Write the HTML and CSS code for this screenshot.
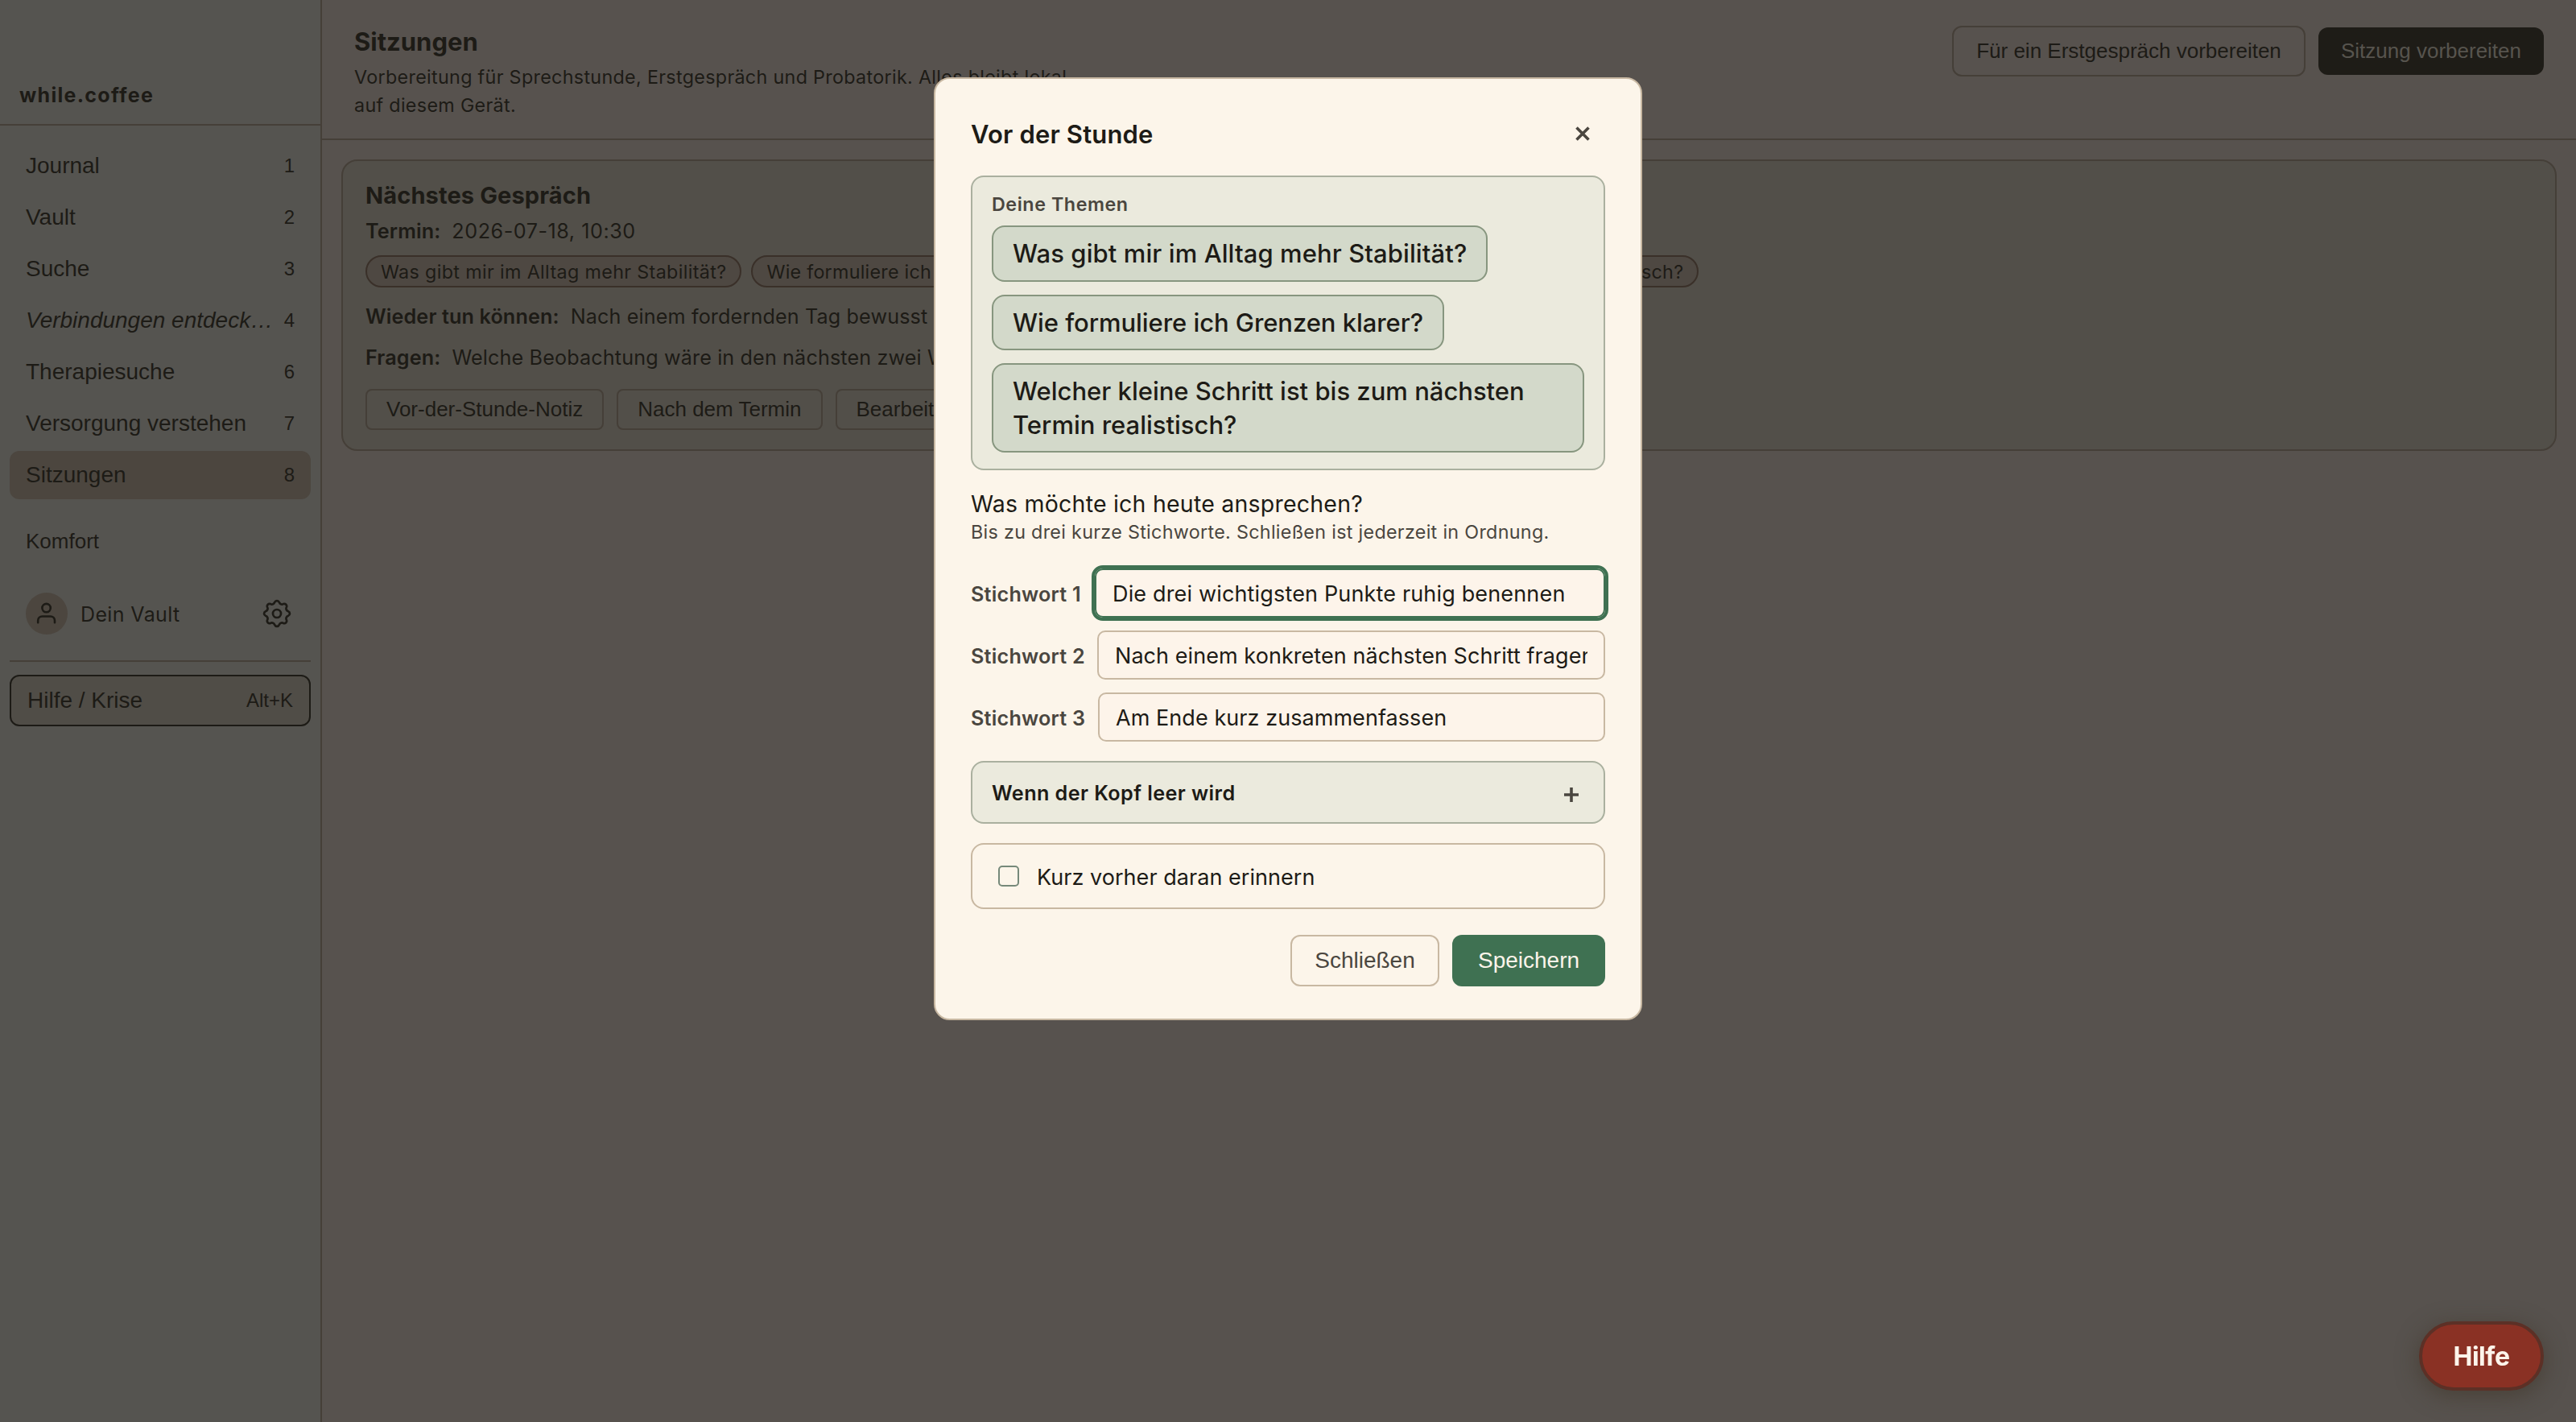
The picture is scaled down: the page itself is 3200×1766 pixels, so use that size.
FILE: index.html
```html
<!DOCTYPE html>
<html lang="de">
<head>
<meta charset="utf-8">
<title>while.coffee – Sitzungen</title>
<link rel="stylesheet" href="styles.css">
</head>
<body>
<div class="app">
  <aside class="sidebar">
    <div class="brand">while.coffee</div>
    <nav class="nav">
      <a class="nav-item"><span class="nav-label">Journal</span><span class="nav-key">1</span></a>
      <a class="nav-item"><span class="nav-label">Vault</span><span class="nav-key">2</span></a>
      <a class="nav-item"><span class="nav-label">Suche</span><span class="nav-key">3</span></a>
      <a class="nav-item nav-item-italic"><span class="nav-label">Verbindungen entdecken</span><span class="nav-key">4</span></a>
      <a class="nav-item"><span class="nav-label">Therapiesuche</span><span class="nav-key">6</span></a>
      <a class="nav-item"><span class="nav-label">Versorgung verstehen</span><span class="nav-key">7</span></a>
      <a class="nav-item nav-item-active"><span class="nav-label">Sitzungen</span><span class="nav-key">8</span></a>
    </nav>
    <div class="comfort">Komfort</div>
    <div class="profile">
      <span class="avatar">
        <svg width="31.2" height="31.2" viewBox="0 0 24 24" fill="none" stroke="currentColor" stroke-width="2" stroke-linecap="round" stroke-linejoin="round"><path d="M20 21v-2a4 4 0 0 0-4-4H8a4 4 0 0 0-4 4v2"/><circle cx="12" cy="7" r="4"/></svg>
      </span>
      <span class="profile-name">Dein Vault</span>
      <svg class="gear" width="36" height="36" viewBox="-18 -18 36 36" fill="none" stroke="currentColor" stroke-width="2.7" stroke-linejoin="round"><path d="M-2.79-14.03A3 3 0 0 1 2.79-14.03A3.6 3.6 0 0 0 7.94-11.89A3 3 0 0 1 11.89-7.94A3.6 3.6 0 0 0 14.03-2.79A3 3 0 0 1 14.03 2.79A3.6 3.6 0 0 0 11.89 7.94A3 3 0 0 1 7.94 11.89A3.6 3.6 0 0 0 2.79 14.03A3 3 0 0 1-2.79 14.03A3.6 3.6 0 0 0-7.94 11.89A3 3 0 0 1-11.89 7.94A3.6 3.6 0 0 0-14.03 2.79A3 3 0 0 1-14.03-2.79A3.6 3.6 0 0 0-11.89-7.94A3 3 0 0 1-7.94-11.89A3.6 3.6 0 0 0-2.79-14.03Z"/><circle r="5"/></svg>
    </div>
    <div class="divider"></div>
    <button class="crisis"><span>Hilfe / Krise</span><span class="crisis-key">Alt+K</span></button>
  </aside>

  <main class="main">
    <header class="page-head">
      <div>
        <h1 class="page-title">Sitzungen</h1>
        <p class="page-sub">Vorbereitung für Sprechstunde, Erstgespräch und Probatorik. Alles bleibt lokal auf diesem Gerät.</p>
      </div>
      <div class="head-actions">
        <button class="btn-head">Für ein Erstgespräch vorbereiten</button>
        <button class="btn-head-dark">Sitzung vorbereiten</button>
      </div>
    </header>
    <section class="card">
      <h2 class="card-title">Nächstes Gespräch</h2>
      <p class="fact fact-date"><b>Termin:</b><span class="date">2026-07-18, 10:30</span></p>
      <div class="tags">
        <span class="tag">Was gibt mir im Alltag mehr Stabilität?</span>
        <span class="tag tag-tight">Wie formuliere ich Grenzen klarer?</span>
        <span class="tag tag-tight">Welcher kleine Schritt ist bis zum nächsten Termin realistisch?</span>
      </div>
      <p class="fact fact-again"><b>Wieder tun können:</b><span>Nach einem fordernden Tag bewusst</span></p>
      <p class="fact fact-ask"><b>Fragen:</b><span>Welche Beobachtung wäre in den nächsten zwei W</span></p>
      <div class="card-actions">
        <button class="btn-card">Vor-der-Stunde-Notiz</button>
        <button class="btn-card">Nach dem Termin</button>
        <button class="btn-card">Bearbeiten</button>
      </div>
    </section>
  </main>
</div>

<button class="help">Hilfe</button>

<div class="overlay">
  <div class="modal" role="dialog">
    <header class="modal-head">
      <h2 class="modal-title">Vor der Stunde</h2>
      <svg class="close" width="20" height="20" viewBox="0 0 20 20" fill="none" stroke="currentColor" stroke-width="3.6"><path d="M2.5 2.5l15 15M17.5 2.5l-15 15"/></svg>
    </header>
    <section class="topics">
      <div class="topics-label">Deine Themen</div>
      <div class="topic topic-1">Was gibt mir im Alltag mehr Stabilität?</div>
      <div class="topic topic-2">Wie formuliere ich Grenzen klarer?</div>
      <div class="topic topic-3">Welcher kleine Schritt ist bis zum nächsten<br>Termin realistisch?</div>
    </section>
    <h3 class="question">Was möchte ich heute ansprechen?</h3>
    <p class="hint">Bis zu drei kurze Stichworte. Schließen ist jederzeit in Ordnung.</p>
    <div class="fields">
      <label class="field"><span class="field-label label-1">Stichwort 1</span><input class="field-input field-focus" type="text" value="Die drei wichtigsten Punkte ruhig benennen"></label>
      <label class="field"><span class="field-label label-2">Stichwort 2</span><input class="field-input" type="text" value="Nach einem konkreten nächsten Schritt fragen"></label>
      <label class="field"><span class="field-label label-3">Stichwort 3</span><input class="field-input" type="text" value="Am Ende kurz zusammenfassen"></label>
    </div>
    <div class="accordion"><span>Wenn der Kopf leer wird</span>
      <svg class="plus" width="18" height="18" viewBox="0 0 18 18" fill="none" stroke="currentColor" stroke-width="3.6"><path d="M9 0v18M0 9h18"/></svg>
    </div>
    <label class="remind"><span class="check"></span><span class="remind-text">Kurz vorher daran erinnern</span></label>
    <footer class="modal-foot">
      <button class="btn-close">Schließen</button>
      <button class="btn-save">Speichern</button>
    </footer>
  </div>
</div>
</body>
</html>
```
FILE: styles.css
```css
:root {
  --ink: #1d1b16;
  --side: #555450;
  --page: #57524e;
  --card: #524f49;
  --line: #453f38;
  --sans: Inter, "Liberation Sans", sans-serif;
  --ui: "Liberation Sans", Arial, sans-serif;
}
* { box-sizing: border-box; }
body { margin: 0; background: var(--page); color: var(--ink); font-family: var(--sans); }
h1, h2, h3, p { margin: 0; }
button { margin: 0; padding: 0; font-family: var(--ui); color: inherit; background: none; cursor: pointer; }
.app { display: flex; height: 1766px; }

.sidebar { width: 400px; flex: none; background: var(--side); border-right: 2px solid var(--line); font-family: var(--ui); }
.brand { height: 156px; padding: 100px 0 0 24px; border-bottom: 2px solid var(--line); font: 700 25px/36px var(--sans); letter-spacing: 1.28px; }
.nav { display: flex; flex-direction: column; gap: 4px; padding: 20px 12px 0 12px; }
.nav-item { display: flex; align-items: center; gap: 12px; height: 60px; padding: 0 20px; border-radius: 12px; font-size: 28px; }
.nav-label { flex: 1; min-width: 0; overflow: hidden; white-space: nowrap; text-overflow: ellipsis; line-height: 40px; }
.nav-key { font-size: 24px; font-style: normal; }
.nav-item-italic .nav-label { font-style: italic; }
.nav-item-active { background: #4c463f; }
.comfort { margin: 32px 0 0 32px; font-size: 26px; line-height: 40px; }
.profile { display: flex; align-items: center; gap: 16px; margin-top: 44px; padding: 0 36px 0 32px; height: 52px; }
.avatar { display: flex; align-items: center; justify-content: center; width: 52px; height: 52px; border-radius: 50%; background: #4c463f; }
.profile-name { flex: 1; padding-top: 1px; font: 400 25px/40px var(--sans); letter-spacing: .37px; }
.divider { height: 2px; margin: 32px 12px 0 12px; background: var(--line); }
.crisis { display: flex; align-items: center; justify-content: space-between; width: 374px; height: 64px; margin: 16px 0 0 12px; padding: 0 20px; border: 2px solid var(--ink); border-radius: 12px; background: #504d47; font-size: 28px; }
.crisis-key { font-size: 24px; }

.main { flex: 1; min-width: 0; }
.page-head { display: flex; justify-content: space-between; height: 174px; padding: 32px 40px 0; border-bottom: 2px solid var(--line); }
.page-title { font-size: 31px; line-height: 40px; font-weight: 700; }
.page-sub { width: 900px; margin-top: 6px; font-size: 23.3px; line-height: 35px; letter-spacing: .32px; }
.head-actions { display: flex; align-items: center; gap: 16px; height: 63px; }
.btn-head { width: 439px; height: 63px; border: 2px solid var(--line); border-radius: 12px; font-size: 26px; }
.btn-head-dark { width: 280px; height: 59px; border: 0; border-radius: 12px; background: #1e1c17; color: #57544e; font-size: 26px; }

.card { margin: 24px; height: 362px; padding: 25px 28px 23px; border: 2px solid var(--line); border-radius: 20px; background: var(--card); }
.card-title { font-size: 29px; line-height: 36px; font-weight: 700; letter-spacing: .13px; }
.fact { display: flex; gap: 14px; font-size: 25.2px; line-height: 40px; white-space: nowrap; letter-spacing: .12px; }
.fact b { font-weight: 600; }
.date { letter-spacing: .52px; }
.fact-date { margin-top: 6px; }
.fact-again { margin-top: 16px; }
.fact-ask { margin-top: 11px; }
.tags { display: flex; gap: 12px; margin-top: 10px; }
.tag { height: 40px; padding: 0 17px; border: 2px solid #3a3029; border-radius: 20px; background: #4e4842; font-size: 23.3px; line-height: 37px; letter-spacing: .35px; white-space: nowrap; }
.tag-tight { letter-spacing: .25px; }
.card-actions { display: flex; gap: 16px; margin-top: 19px; }
.btn-card { height: 51px; padding: 0 24px; border: 2px solid var(--line); border-radius: 8px; font-size: 26px; }

.help { position: fixed; right: 40px; bottom: 39px; width: 155px; height: 86px; padding-top: 1px; border: 4px solid #5c3026; border-radius: 43px; background: #8a3124; color: #fdf4ea; font: 700 32px/40px var(--sans); letter-spacing: -.45px; box-shadow: 0 6px 28px rgba(60, 50, 35, .55); }

.overlay { position: fixed; inset: 0; padding-top: 96px; }
.modal { width: 880px; height: 1171px; margin: 0 auto; padding: 44px 44px 40px; border: 2px solid #c8b8a2; border-radius: 20px; background: #fcf5ea; }
.modal-head { display: flex; align-items: center; justify-content: space-between; height: 48px; padding-right: 18px; color: #4a463f; }
.modal-title { padding-top: 1px; font-size: 31px; line-height: 40px; font-weight: 600; letter-spacing: .16px; color: var(--ink); }
.topics { display: flex; flex-direction: column; align-items: flex-start; gap: 16px; height: 366px; margin-top: 28px; padding: 18px 24px; border: 2px solid #aab09f; border-radius: 16px; background: #ebeadd; }
.topics-label { margin-bottom: -6px; font-size: 23.3px; line-height: 32px; font-weight: 600; letter-spacing: .55px; color: #4a463f; }
.topic { padding: 12px 24px; border: 2px solid #87967f; border-radius: 16px; background: #d3d9ca; font-size: 31px; line-height: 41.6px; font-weight: 500; white-space: nowrap; }
.topic-1 { width: 616px; letter-spacing: .09px; }
.topic-2 { width: 562px; letter-spacing: -.06px; }
.topic-3 { width: 736px; }
.question { margin-top: 24px; font-size: 28.5px; line-height: 36px; font-weight: 400; letter-spacing: .22px; }
.hint { padding-top: 1px; font-size: 23.3px; line-height: 32px; letter-spacing: .31px; color: #4a463f; white-space: nowrap; }
.fields { display: flex; flex-direction: column; gap: 16px; margin-top: 29px; }
.field { display: flex; align-items: center; height: 61px; }
.field-label { flex: none; padding-top: 2px; font-size: 25.2px; font-weight: 600; letter-spacing: .22px; color: #4a463f; white-space: nowrap; }
.label-1 { width: 154px; }
.label-2 { width: 157px; }
.label-3 { width: 158px; }
.field-input { flex: 1; min-width: 0; height: 61px; padding: 1px 20px 0; border: 2px solid #c8b8a2; border-radius: 10px; background: #fdf4ea; color: var(--ink); font: 400 27px/40px var(--sans); letter-spacing: .06px; }
.field-focus { border-color: #3f7152; outline: 4px solid #3f7152; letter-spacing: .16px; }
.accordion { display: flex; align-items: center; justify-content: space-between; height: 78px; margin-top: 24px; padding: 1px 31px 0 24px; border: 2px solid #aab09f; border-radius: 16px; background: #ebeadd; font-size: 25.2px; font-weight: 600; letter-spacing: .42px; }
.plus { margin-top: 4px; color: #4a463f; }
.remind { display: flex; align-items: center; gap: 22px; height: 82px; margin-top: 24px; padding-left: 32px; border: 2px solid #c8b8a2; border-radius: 16px; font-size: 27px; letter-spacing: .04px; }
.remind-text { padding-top: 2px; }
.check { width: 26px; height: 26px; border: 2px solid #76897a; border-radius: 5px; }
.modal-foot { display: flex; justify-content: flex-end; gap: 16px; margin-top: 32px; }
.btn-close { width: 185px; height: 64px; border: 2px solid #c8b8a2; border-radius: 12px; font-size: 28px; color: #4a463f; }
.btn-save { width: 190px; height: 64px; border: 0; border-radius: 12px; background: #3f7152; color: #fdf4ea; font-size: 28px; }
```
